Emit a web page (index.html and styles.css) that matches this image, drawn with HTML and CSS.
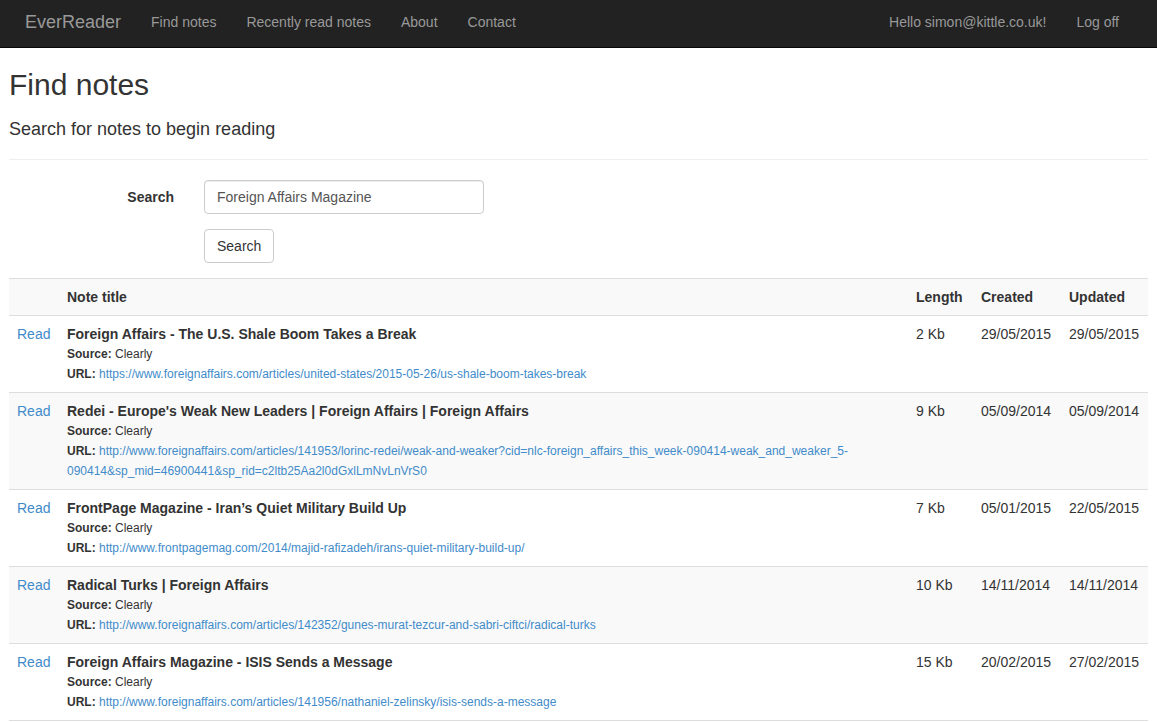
FILE: index.html
```html
<!DOCTYPE html>
<html lang="en">
<head>
<meta charset="utf-8">
<title>Find notes - EverReader</title>
<link rel="stylesheet" href="styles.css">
</head>
<body>
<nav class="navbar">
  <a class="brand" href="#">EverReader</a>
  <ul class="nav">
    <li><a href="#">Find notes</a></li>
    <li><a href="#">Recently read notes</a></li>
    <li><a href="#">About</a></li>
    <li><a href="#">Contact</a></li>
  </ul>
  <ul class="nav nav-right">
    <li><a href="#">Hello simon@kittle.co.uk!</a></li>
    <li><a href="#">Log off</a></li>
  </ul>
</nav>

<main class="content">
  <h2 class="page-title">Find notes</h2>
  <h4 class="subtitle">Search for notes to begin reading</h4>
  <hr class="divider">

  <form class="search-form">
    <div class="form-row">
      <label class="control-label" for="q">Search</label>
      <input class="form-control" id="q" type="text" value="Foreign Affairs Magazine">
    </div>
    <div class="form-row button-row">
      <button class="btn" type="button">Search</button>
    </div>
  </form>

  <table class="notes">
    <colgroup>
      <col class="c-read">
      <col class="c-title">
      <col class="c-length">
      <col class="c-created">
      <col class="c-updated">
    </colgroup>
    <tbody>
      <tr class="head">
        <th></th>
        <th>Note title</th>
        <th>Length</th>
        <th>Created</th>
        <th>Updated</th>
      </tr>
      <tr>
        <td><a href="#">Read</a></td>
        <td>
          <div class="note-title">Foreign Affairs - The U.S. Shale Boom Takes a Break</div>
          <div class="meta"><b>Source:</b> Clearly</div>
          <div class="meta"><b>URL:</b> <a href="#">https://www.foreignaffairs.com/articles/united-states/2015-05-26/us-shale-boom-takes-break</a></div>
        </td>
        <td>2 Kb</td>
        <td>29/05/2015</td>
        <td>29/05/2015</td>
      </tr>
      <tr>
        <td><a href="#">Read</a></td>
        <td>
          <div class="note-title">Redei - Europe's Weak New Leaders | Foreign Affairs | Foreign Affairs</div>
          <div class="meta"><b>Source:</b> Clearly</div>
          <div class="meta"><b>URL:</b> <a href="#">http://www.foreignaffairs.com/articles/141953/lorinc-redei/weak-and-weaker?cid=nlc-foreign_affairs_this_week-090414-weak_and_weaker_5-<wbr>090414&amp;sp_mid=46900441&amp;sp_rid=c2ltb25Aa2l0dGxlLmNvLnVrS0</a></div>
        </td>
        <td>9 Kb</td>
        <td>05/09/2014</td>
        <td>05/09/2014</td>
      </tr>
      <tr>
        <td><a href="#">Read</a></td>
        <td>
          <div class="note-title">FrontPage Magazine - Iran’s Quiet Military Build Up</div>
          <div class="meta"><b>Source:</b> Clearly</div>
          <div class="meta"><b>URL:</b> <a href="#">http://www.frontpagemag.com/2014/majid-rafizadeh/irans-quiet-military-build-up/</a></div>
        </td>
        <td>7 Kb</td>
        <td>05/01/2015</td>
        <td>22/05/2015</td>
      </tr>
      <tr>
        <td><a href="#">Read</a></td>
        <td>
          <div class="note-title">Radical Turks | Foreign Affairs</div>
          <div class="meta"><b>Source:</b> Clearly</div>
          <div class="meta"><b>URL:</b> <a href="#">http://www.foreignaffairs.com/articles/142352/gunes-murat-tezcur-and-sabri-ciftci/radical-turks</a></div>
        </td>
        <td>10 Kb</td>
        <td>14/11/2014</td>
        <td>14/11/2014</td>
      </tr>
      <tr>
        <td><a href="#">Read</a></td>
        <td>
          <div class="note-title">Foreign Affairs Magazine - ISIS Sends a Message</div>
          <div class="meta"><b>Source:</b> Clearly</div>
          <div class="meta"><b>URL:</b> <a href="#">http://www.foreignaffairs.com/articles/141956/nathaniel-zelinsky/isis-sends-a-message</a></div>
        </td>
        <td>15 Kb</td>
        <td>20/02/2015</td>
        <td>27/02/2015</td>
      </tr>
    </tbody>
  </table>
</main>
</body>
</html>
```

FILE: styles.css
```css
* { box-sizing: border-box; }

html, body {
  margin: 0;
  padding: 0;
  background: #fff;
}

body {
  font-family: "Liberation Sans", Arial, Helvetica, sans-serif;
  font-size: 14px;
  line-height: 20px;
  color: #333;
}

a {
  color: #428bca;
  text-decoration: none;
}

/* Navbar */
.navbar {
  display: flex;
  align-items: flex-start;
  height: 48px;
  background: #222;
  border-bottom: 1px solid #080808;
  padding: 0 23px 0 10px;
}

.brand {
  color: #999;
  font-size: 18px;
  line-height: 20px;
  padding: 12px 15px;
  margin-right: 0;
}

.nav {
  display: flex;
  list-style: none;
  margin: 0;
  padding: 0 0 0 0;
}

.nav li a {
  display: block;
  color: #999;
  font-size: 14px;
  line-height: 20px;
  padding: 12px 15px;
}

.nav-right {
  margin-left: auto;
}

/* Content */
.content {
  padding: 0 9px;
}

.page-title {
  font-size: 30px;
  font-weight: 500;
  line-height: 33px;
  margin: 20px 0 0 0;
  color: #333;
}

.subtitle {
  font-size: 18px;
  font-weight: 500;
  line-height: 20px;
  margin: 18px 0 0 0;
  color: #333;
}

.divider {
  margin: 20px 0;
  border: 0;
  border-top: 1px solid #eee;
  height: 0;
}

.search-form {
  margin: 0;
}

.form-row {
  display: flex;
  margin-bottom: 15px;
}

.control-label {
  width: 165px;
  margin-right: 30px;
  text-align: right;
  font-weight: bold;
  padding-top: 7px;
  line-height: 20px;
}

.form-control {
  width: 280px;
  height: 34px;
  padding: 6px 12px;
  font-family: inherit;
  font-size: 14px;
  line-height: 20px;
  color: #555;
  background: #fff;
  border: 1px solid #ccc;
  border-radius: 4px;
  box-shadow: inset 0 1px 1px rgba(0,0,0,.075);
  margin: 0;
}

.button-row {
  padding-left: 195px;
}

.btn {
  height: 34px;
  padding: 6px 12px;
  font-family: inherit;
  font-size: 14px;
  line-height: 20px;
  color: #333;
  background: #fff;
  border: 1px solid #ccc;
  border-radius: 4px;
  margin: 0;
}

/* Table */
.notes {
  width: 100%;
  border-collapse: collapse;
  border-spacing: 0;
  table-layout: fixed;
  border-bottom: 1px solid #ddd;
}

.c-read { width: 50px; }
.c-length { width: 65px; }
.c-created { width: 88px; }
.c-updated { width: 87px; }

.notes th,
.notes td {
  padding: 8px;
  border-top: 1px solid #ddd;
  vertical-align: top;
  text-align: left;
  line-height: 20px;
}

.notes th {
  font-weight: bold;
}

.notes tbody tr:nth-child(odd) {
  background: #f9f9f9;
}

.note-title {
  font-weight: bold;
}

.meta {
  font-size: 12px;
  line-height: 20px;
}

.meta b {
  font-weight: bold;
}
```
